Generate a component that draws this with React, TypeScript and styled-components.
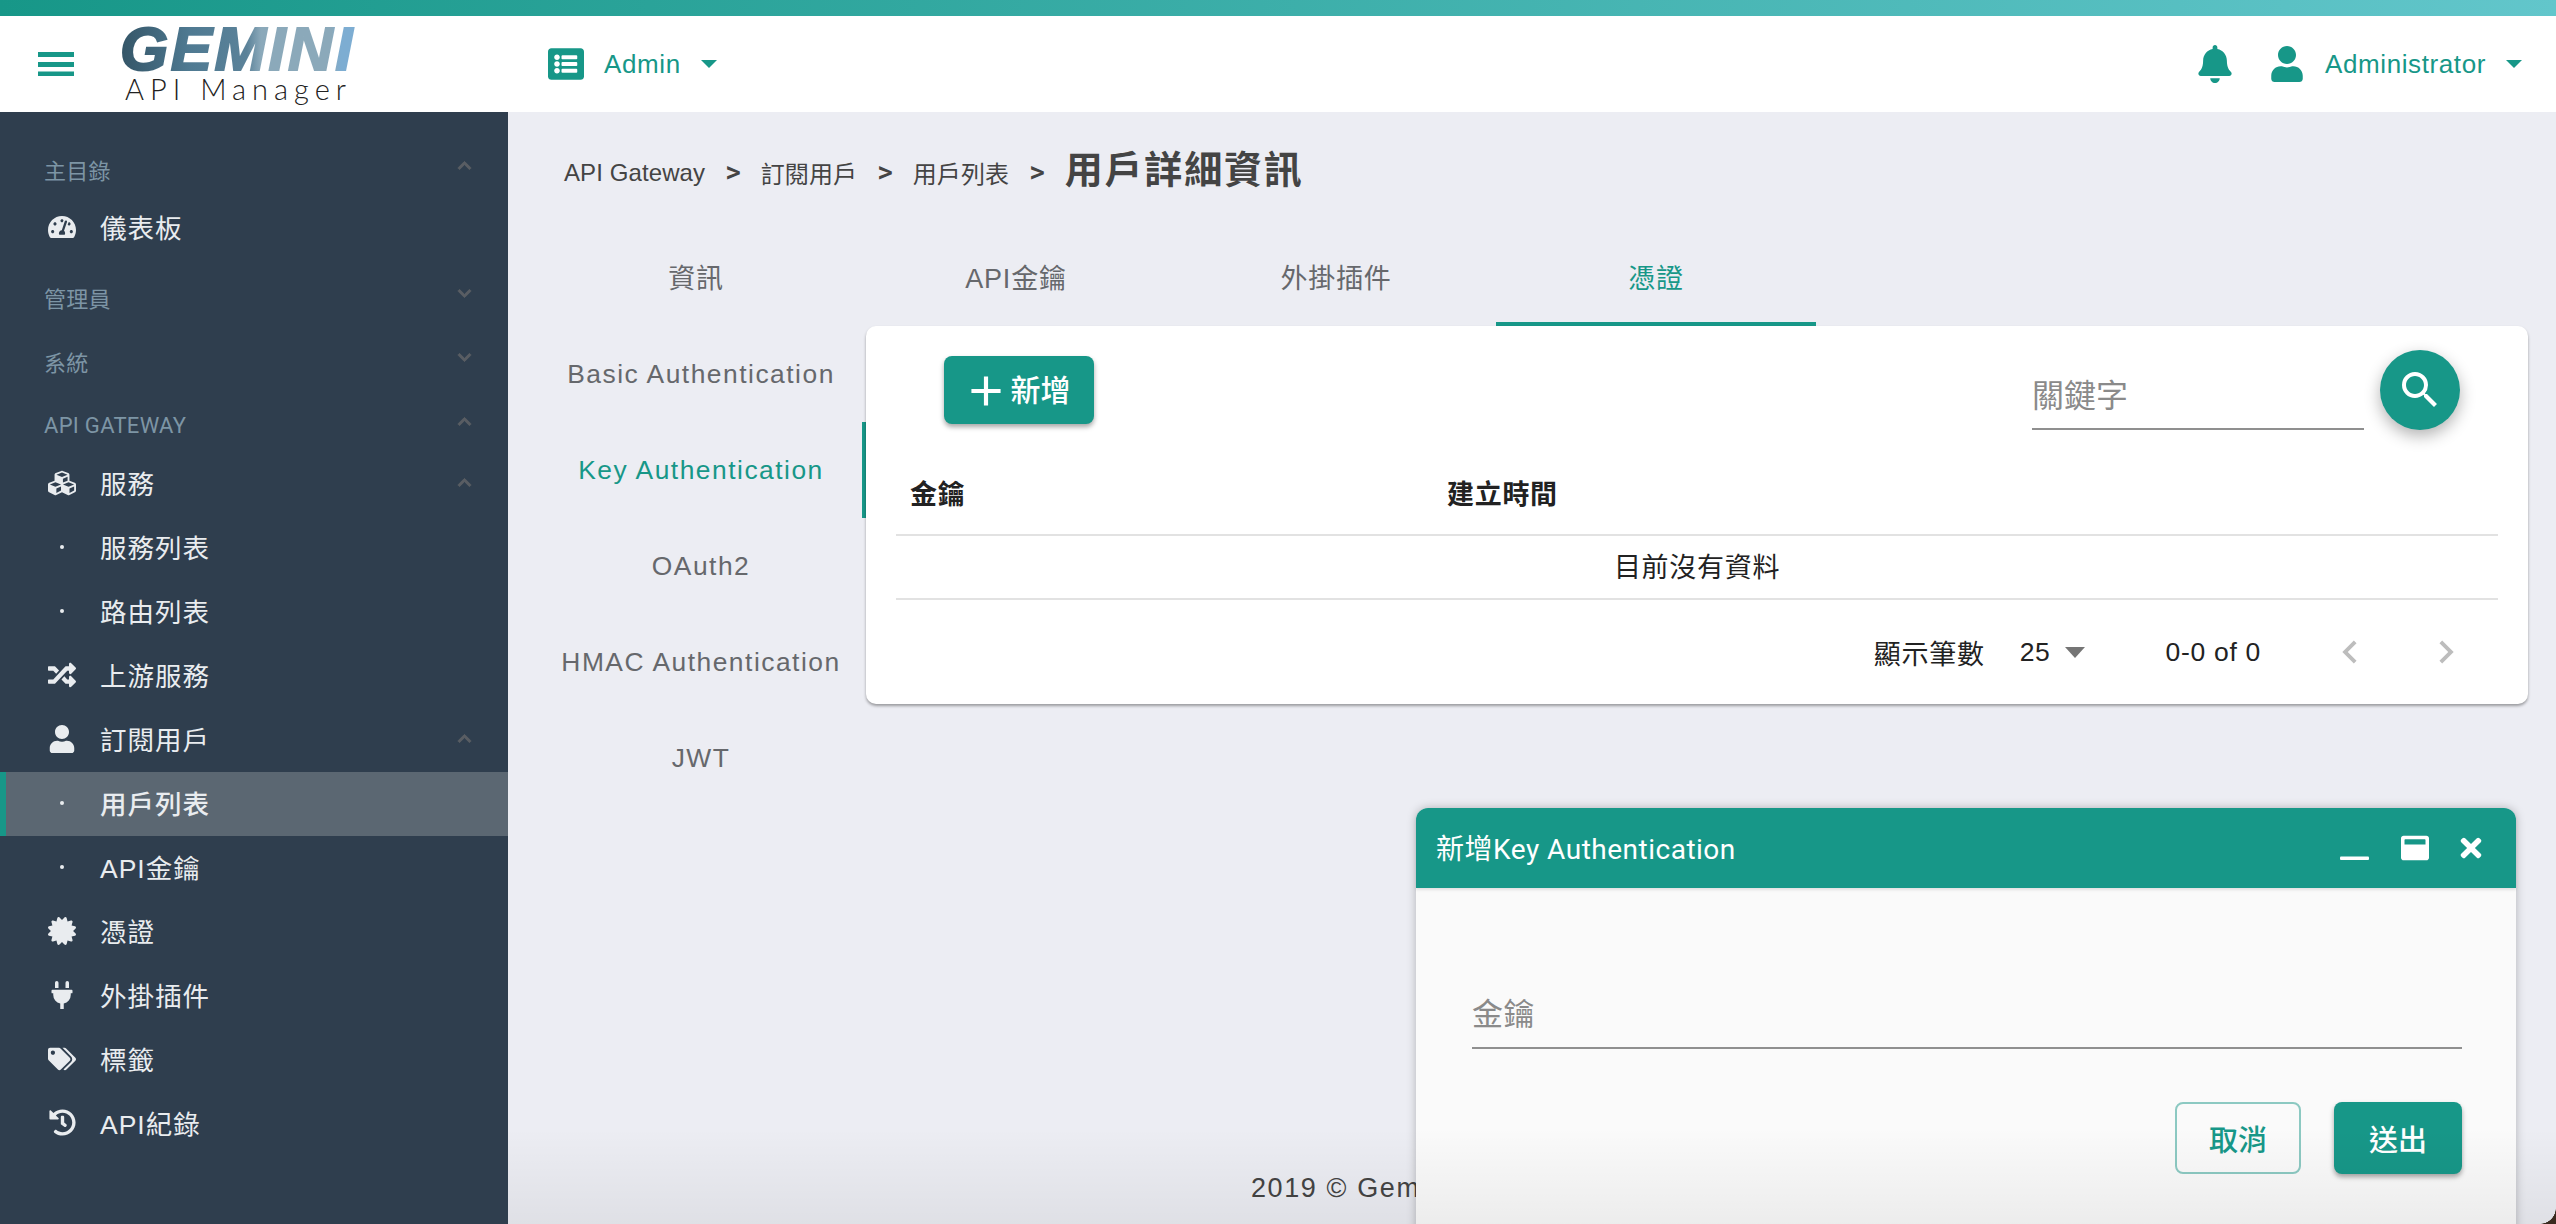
import React from 'react'
import styled, { createGlobalStyle } from 'styled-components'
import {
  FaBell,
  FaCertificate,
  FaChevronDown,
  FaChevronUp,
  FaCubes,
  FaHistory,
  FaListAlt,
  FaPlug,
  FaRandom,
  FaTachometerAlt,
  FaTags,
  FaTimes,
  FaUser,
  FaWindowMaximize,
} from 'react-icons/fa'
import { MdAdd, MdChevronLeft, MdChevronRight, MdSearch } from 'react-icons/md'

const TEAL = '#179788'
const SANS = '"Liberation Sans", "Noto Sans CJK TC", sans-serif'
const ROBOTO = 'Roboto, "Noto Sans CJK TC", sans-serif'

const GlobalStyle = createGlobalStyle`
  html, body {
    margin: 0;
    padding: 0;
    background: #ecedf3;
    font-family: ${SANS};
  }
  * {
    box-sizing: border-box;
  }
`

const Page = styled.div`
  position: relative;
  display: flex;
  flex-direction: column;
  height: 100vh;
  overflow: hidden;
`
const TopStrip = styled.div`
  height: 16px;
  flex: none;
  background: linear-gradient(90deg, ${TEAL} 0%, #62c6cb 100%);
`
const Header = styled.header`
  height: 96px;
  flex: none;
  display: flex;
  align-items: center;
  padding: 0 34px 0 38px;
  background: #fff;
  color: ${TEAL};
`
const Brand = styled.div`
  width: 428px;
  margin-left: 46px;
  display: flex;
  flex-direction: column;
`
const BrandName = styled.div`
  width: max-content;
  font: italic 700 62px/50px ${SANS};
  letter-spacing: 2.4px;
  -webkit-text-stroke: 2px transparent;
  background: linear-gradient(90deg, #345567 0%, #4f7a92 30%, #5b8299 54%, #8ba9ba 60%, #8ba9ba 90%, #7dadd2 94%);
  -webkit-background-clip: text;
  background-clip: text;
  color: transparent;
`
const BrandSub = styled.div`
  font: 300 29px/30px Lato, ${SANS};
  letter-spacing: 6px;
  color: #222;
  margin-left: 5px;
`
const MenuGroup = styled.div<{ $gap?: number }>`
  display: flex;
  align-items: center;
  gap: ${(p) => p.$gap ?? 20}px;
  font-size: 26px;
  letter-spacing: 0.6px;
`
const Caret = styled.span<{ $color?: string; $w?: number }>`
  width: 0;
  height: 0;
  border-style: solid;
  border-width: ${(p) => (p.$w ?? 16) * 0.56}px ${(p) => (p.$w ?? 16) / 2}px 0;
  border-color: ${(p) => p.$color ?? TEAL} transparent transparent;
`
const RightGroup = styled.div`
  margin-left: auto;
  display: flex;
  align-items: center;
  gap: 35px;
`

const Body = styled.div`
  flex: 1;
  display: flex;
  min-height: 0;
`
const Sidebar = styled.nav`
  width: 508px;
  flex: none;
  padding-top: 32px;
  background: #2f3e4e;
  color: #e9ecef;
`
const SectionTitle = styled.div<{ $first?: boolean }>`
  height: 52px;
  margin-top: ${(p) => (p.$first ? 0 : 12)}px;
  padding: 0 36px 2px 44px;
  display: flex;
  align-items: center;
  justify-content: space-between;
  font: 400 22px ${ROBOTO};
  letter-spacing: 0.3px;
  color: #7d95a5;
`
const RaisedChevron = styled.span`
  display: flex;
  margin-bottom: 8px;
  color: #595d63;
  svg {
    stroke: currentColor;
    stroke-width: 30;
  }
`
const Item = styled.div<{ $active?: boolean }>`
  height: 64px;
  padding: 0 36px 3px 44px;
  display: flex;
  align-items: center;
  font-size: 26.5px;
  letter-spacing: 1px;
  font-weight: ${(p) => (p.$active ? 500 : 400)};
  background: ${(p) => (p.$active ? '#5b6772' : 'transparent')};
  box-shadow: ${(p) => (p.$active ? `inset 6px 0 0 ${TEAL}` : 'none')};
`
const IconSlot = styled.span`
  width: 36px;
  margin-right: 20px;
  display: flex;
  justify-content: center;
  flex: none;
`
const Dot = styled.span`
  width: 4px;
  height: 4px;
  border-radius: 50%;
  background: #e9ecef;
`
const ItemChevron = styled.span`
  margin-left: auto;
  display: flex;
  color: #595d63;
  svg {
    stroke: currentColor;
    stroke-width: 30;
  }
`

const Main = styled.main`
  flex: 1;
  min-width: 0;
  display: flex;
  flex-direction: column;
  padding: 28px 28px 0;
`
const Breadcrumb = styled.div`
  height: 60px;
  padding-left: 28px;
  display: flex;
  align-items: center;
  gap: 20px;
  font-size: 24px;
  color: #444;
`
const Crumb = styled.span`
  letter-spacing: 0.1px;
  padding-top: 5px;
`
const CrumbSep = styled.span`
  font: 500 30px ${ROBOTO};
  padding-top: 2px;
`
const CrumbCurrent = styled.span`
  font-size: 38px;
  font-weight: 700;
  letter-spacing: 1.8px;
  padding-bottom: 8px;
`
const Tabs = styled.div`
  margin-top: 30px;
  display: flex;
`
const Tab = styled.div<{ $active?: boolean }>`
  width: 320px;
  height: 96px;
  padding-bottom: 3px;
  display: flex;
  align-items: center;
  justify-content: center;
  font-size: 27px;
  letter-spacing: 0.8px;
  color: ${(p) => (p.$active ? TEAL : '#66686c')};
  box-shadow: ${(p) => (p.$active ? `inset 0 -4px 0 ${TEAL}` : 'none')};
`
const Content = styled.div`
  display: flex;
  align-items: flex-start;
`
const SideTabs = styled.div`
  width: 330px;
  flex: none;
`
const SideTab = styled.div<{ $active?: boolean }>`
  height: 96px;
  display: flex;
  align-items: center;
  justify-content: center;
  font-size: 26.4px;
  letter-spacing: 1.5px;
  color: ${(p) => (p.$active ? TEAL : '#66686c')};
  box-shadow: ${(p) => (p.$active ? `inset -4px 0 0 ${TEAL}` : 'none')};
`
const Card = styled.section`
  flex: 1;
  height: 378px;
  display: flex;
  flex-direction: column;
  background: #fff;
  border-radius: 10px;
  box-shadow: 0 2px 3px rgba(0, 0, 0, 0.35);
`
const Toolbar = styled.div`
  height: 127px;
  flex: none;
  padding: 24px 68px 0 78px;
  display: flex;
  align-items: flex-start;
`
const AddButton = styled.button`
  width: 150px;
  height: 68px;
  margin-top: 6px;
  padding: 2px 0 0 4px;
  border: 0;
  border-radius: 8px;
  display: flex;
  align-items: center;
  justify-content: center;
  gap: 10px;
  background: ${TEAL};
  color: #fff;
  font: 500 30px/1 ${ROBOTO};
  box-shadow: 0 3px 5px rgba(0, 0, 0, 0.35);
  svg {
    margin: 0 -10.5px;
  }
`
const SearchField = styled.input`
  width: 332px;
  height: 66px;
  margin: 14px 16px 0 auto;
  padding: 0;
  border: 0;
  border-bottom: 2px solid #8f8f8f;
  background: transparent;
  outline: none;
  font: 400 32px ${SANS};
  &::placeholder {
    color: #8a8a8a;
    opacity: 1;
  }
`
const Fab = styled.button`
  width: 80px;
  height: 80px;
  padding: 0;
  border: 0;
  border-radius: 50%;
  display: flex;
  align-items: center;
  justify-content: center;
  background: ${TEAL};
  color: #fff;
  box-shadow: 0 6px 16px rgba(0, 0, 0, 0.3);
`
const Table = styled.table`
  width: calc(100% - 60px);
  margin: 0 30px;
  flex: none;
  border-collapse: collapse;
  font-size: 27px;
  letter-spacing: 0.7px;
  color: #222;
`
const HeadCell = styled.th<{ $w?: number }>`
  width: ${(p) => (p.$w ? `${p.$w}px` : 'auto')};
  height: 82px;
  padding: 0 0 2px 14px;
  text-align: left;
  font-weight: 700;
  border-bottom: 2px solid #e2e2e2;
`
const EmptyCell = styled.td`
  height: 64px;
  padding: 0 0 4px;
  text-align: center;
  border-bottom: 2px solid #e2e2e2;
`
const Pager = styled.div`
  flex: 1;
  padding-right: 59px;
  display: flex;
  align-items: center;
  justify-content: flex-end;
  font-size: 26.5px;
  letter-spacing: 0.7px;
  color: #222;
`
const PagerLabel = styled.span`
  font-size: 27px;
  letter-spacing: 0.7px;
`
const PagerSize = styled.span`
  margin-left: 35px;
  display: flex;
  align-items: center;
  gap: 14px;
`
const PagerRange = styled.span`
  margin: 0 66px 0 81px;
`
const PagerArrows = styled.span`
  display: flex;
  gap: 50px;
  color: #bdbdbd;
`
const Footer = styled.footer`
  margin-top: auto;
  padding: 0 0 20px 715px;
  font-size: 27px;
  letter-spacing: 1.6px;
  color: #444;
`

const Dialog = styled.div`
  position: absolute;
  top: 808px;
  right: 40px;
  bottom: -20px;
  width: 1100px;
  border-radius: 12px 12px 0 0;
  background: #fafafa;
  box-shadow: 0 0 10px rgba(0, 0, 0, 0.25);
`
const DialogHead = styled.div`
  height: 80px;
  padding: 0 30px 0 20px;
  display: flex;
  align-items: center;
  border-radius: 12px 12px 0 0;
  background: ${TEAL};
  color: #fff;
  font: 400 28px ${ROBOTO};
  letter-spacing: 0.5px;
  box-shadow: 0 2px 3px rgba(0, 0, 0, 0.1);
`
const DialogTitle = styled.span`
  padding-bottom: 2px;
`
const WindowControls = styled.div`
  margin-left: auto;
  display: flex;
  align-items: center;
  gap: 32px;
  svg:last-child {
    margin-left: -5px;
  }
`
const DialogBody = styled.div`
  padding: 95px 54px 0 56px;
`
const KeyField = styled.input`
  display: block;
  width: 100%;
  height: 66px;
  padding: 0;
  border: 0;
  border-bottom: 2px solid #8f8f8f;
  background: transparent;
  outline: none;
  font: 400 31px ${SANS};
  letter-spacing: 0.6px;
  &::placeholder {
    color: #8a8a8a;
    opacity: 1;
  }
`
const DialogActions = styled.div`
  margin-top: 53px;
  display: flex;
  justify-content: flex-end;
  gap: 33px;
`
const ActionButton = styled.button<{ $primary?: boolean }>`
  width: ${(p) => (p.$primary ? 128 : 126)}px;
  height: 72px;
  border-radius: 8px;
  border: ${(p) => (p.$primary ? '0' : '2px solid #8cc9c2')};
  background: ${(p) => (p.$primary ? TEAL : 'transparent')};
  color: ${(p) => (p.$primary ? '#fff' : TEAL)};
  font: 500 29px ${ROBOTO};
  box-shadow: ${(p) => (p.$primary ? '0 3px 5px rgba(0, 0, 0, 0.35)' : 'none')};
`
const BottomFade = styled.div`
  position: absolute;
  left: 508px;
  right: 0;
  bottom: 0;
  height: 96px;
  pointer-events: none;
  background: linear-gradient(180deg, rgba(0, 0, 0, 0) 0%, rgba(0, 0, 0, 0.055) 100%);
`
const ScreenCorner = styled.div`
  position: absolute;
  right: 0;
  bottom: 0;
  width: 16px;
  height: 16px;
  background: radial-gradient(circle at 0 0, transparent 15.5px, #3a2a1f 16px);
`

const chevronUp = <FaChevronUp size={15} />
const chevronDown = <FaChevronDown size={15} />

const SectionHead = ({ label, open, first }: { label: string; open?: boolean; first?: boolean }) => (
  <SectionTitle $first={first}>
    {label}
    <RaisedChevron>{open ? chevronUp : chevronDown}</RaisedChevron>
  </SectionTitle>
)

const NavItem = ({
  icon,
  label,
  chevron,
  active,
}: {
  icon?: React.ReactNode
  label: string
  chevron?: boolean
  active?: boolean
}) => (
  <Item $active={active}>
    <IconSlot>{icon ?? <Dot />}</IconSlot>
    {label}
    {chevron && <ItemChevron>{chevronUp}</ItemChevron>}
  </Item>
)

const App = (): React.ReactElement => {
  return (
    <Page>
      <GlobalStyle />
      <TopStrip />
      <Header>
        <svg width="36" height="24" viewBox="0 0 36 24" fill={TEAL}>
          <rect y="0" width="36" height="5" />
          <rect y="10" width="36" height="5" />
          <rect y="19.5" width="36" height="4.5" />
        </svg>
        <Brand>
          <BrandName>GEMINI</BrandName>
          <BrandSub>API Manager</BrandSub>
        </Brand>
        <MenuGroup>
          <FaListAlt size={36} />
          <span>Admin</span>
          <Caret />
        </MenuGroup>
        <RightGroup>
          <FaBell size={38} />
          <MenuGroup>
            <FaUser size={36} />
            <span>Administrator</span>
            <Caret />
          </MenuGroup>
        </RightGroup>
      </Header>
      <Body>
        <Sidebar>
          <SectionHead label="主目錄" open first />
          <NavItem icon={<FaTachometerAlt size={28} />} label="儀表板" />
          <SectionHead label="管理員" />
          <SectionHead label="系統" />
          <SectionHead label="API GATEWAY" open />
          <NavItem icon={<FaCubes size={28} />} label="服務" chevron />
          <NavItem label="服務列表" />
          <NavItem label="路由列表" />
          <NavItem icon={<FaRandom size={28} />} label="上游服務" />
          <NavItem icon={<FaUser size={28} />} label="訂閱用戶" chevron />
          <NavItem label="用戶列表" active />
          <NavItem label="API金鑰" />
          <NavItem icon={<FaCertificate size={28} />} label="憑證" />
          <NavItem icon={<FaPlug size={28} />} label="外掛插件" />
          <NavItem icon={<FaTags size={28} />} label="標籤" />
          <NavItem icon={<FaHistory size={27} />} label="API紀錄" />
        </Sidebar>
        <Main>
          <Breadcrumb>
            <Crumb>API Gateway</Crumb>
            <CrumbSep>&gt;</CrumbSep>
            <Crumb>訂閱用戶</Crumb>
            <CrumbSep>&gt;</CrumbSep>
            <Crumb>用戶列表</Crumb>
            <CrumbSep>&gt;</CrumbSep>
            <CrumbCurrent>用戶詳細資訊</CrumbCurrent>
          </Breadcrumb>
          <Tabs>
            <Tab>資訊</Tab>
            <Tab>API金鑰</Tab>
            <Tab>外掛插件</Tab>
            <Tab $active>憑證</Tab>
          </Tabs>
          <Content>
            <SideTabs>
              <SideTab>Basic Authentication</SideTab>
              <SideTab $active>Key Authentication</SideTab>
              <SideTab>OAuth2</SideTab>
              <SideTab>HMAC Authentication</SideTab>
              <SideTab>JWT</SideTab>
            </SideTabs>
            <Card>
              <Toolbar>
                <AddButton>
                  <MdAdd size={50} />
                  新增
                </AddButton>
                <SearchField placeholder="關鍵字" />
                <Fab>
                  <MdSearch size={48} />
                </Fab>
              </Toolbar>
              <Table>
                <thead>
                  <tr>
                    <HeadCell $w={537}>金鑰</HeadCell>
                    <HeadCell>建立時間</HeadCell>
                  </tr>
                </thead>
                <tbody>
                  <tr>
                    <EmptyCell colSpan={2}>目前沒有資料</EmptyCell>
                  </tr>
                </tbody>
              </Table>
              <Pager>
                <PagerLabel>顯示筆數</PagerLabel>
                <PagerSize>
                  25
                  <Caret $color="#757575" $w={20} />
                </PagerSize>
                <PagerRange>0-0 of 0</PagerRange>
                <PagerArrows>
                  <MdChevronLeft size={46} />
                  <MdChevronRight size={46} />
                </PagerArrows>
              </Pager>
            </Card>
          </Content>
          <Footer>2019 © Gemini API Manager</Footer>
        </Main>
      </Body>
      <Dialog>
        <DialogHead>
          <DialogTitle>新增Key Authentication</DialogTitle>
          <WindowControls>
            <svg width="29" height="24" viewBox="0 0 29 24" fill="#fff">
              <rect y="20.5" width="29" height="3.5" rx="1" />
            </svg>
            <FaWindowMaximize size={28} />
            <FaTimes size={30} />
          </WindowControls>
        </DialogHead>
        <DialogBody>
          <KeyField placeholder="金鑰" />
          <DialogActions>
            <ActionButton>取消</ActionButton>
            <ActionButton $primary>送出</ActionButton>
          </DialogActions>
        </DialogBody>
      </Dialog>
      <BottomFade />
      <ScreenCorner />
    </Page>
  )
}

export default App
